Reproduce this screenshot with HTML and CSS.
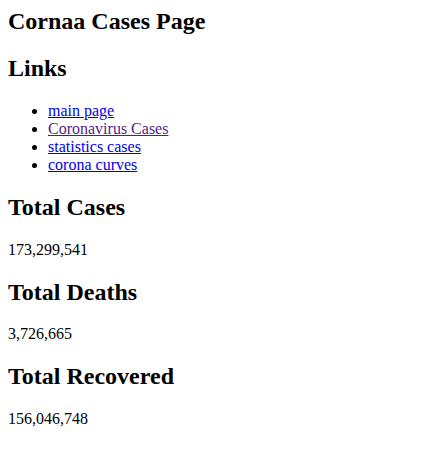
FILE: index.html
```html
<!DOCTYPE html>
<html>
<head>
<meta charset="utf-8">
<title>Cornaa Cases Page</title>
<link rel="stylesheet" href="styles.css">
</head>
<body>
<h2 class="title">Cornaa Cases Page</h2>
<h2>Links</h2>
<ul class="links">
<li><a href="#main">main page</a></li>
<li><a class="visited" href="#cases">Coronavirus Cases</a></li>
<li><a href="#stats">statistics cases</a></li>
<li><a href="#curves">corona curves</a></li>
</ul>
<h2>Total Cases</h2>
<p>173,299,541</p>
<h2>Total Deaths</h2>
<p>3,726,665</p>
<h2>Total Recovered</h2>
<p>156,046,748</p>
</body>
</html>
```
FILE: styles.css
```css
body {
  margin: 8px;
  font-family: "Liberation Serif", "Times New Roman", serif;
  font-size: 16px;
  color: #000;
  background: #fff;
}
h2 {
  font-size: 24px;
  font-weight: bold;
  margin: 19.92px 0;
}
.title {
  margin-top: 0;
}
.links {
  margin: 16px 0;
  padding-left: 40px;
}
a {
  color: #0000ee;
}
a.visited {
  color: #551a8b;
}
p {
  margin: 16px 0;
}
```
